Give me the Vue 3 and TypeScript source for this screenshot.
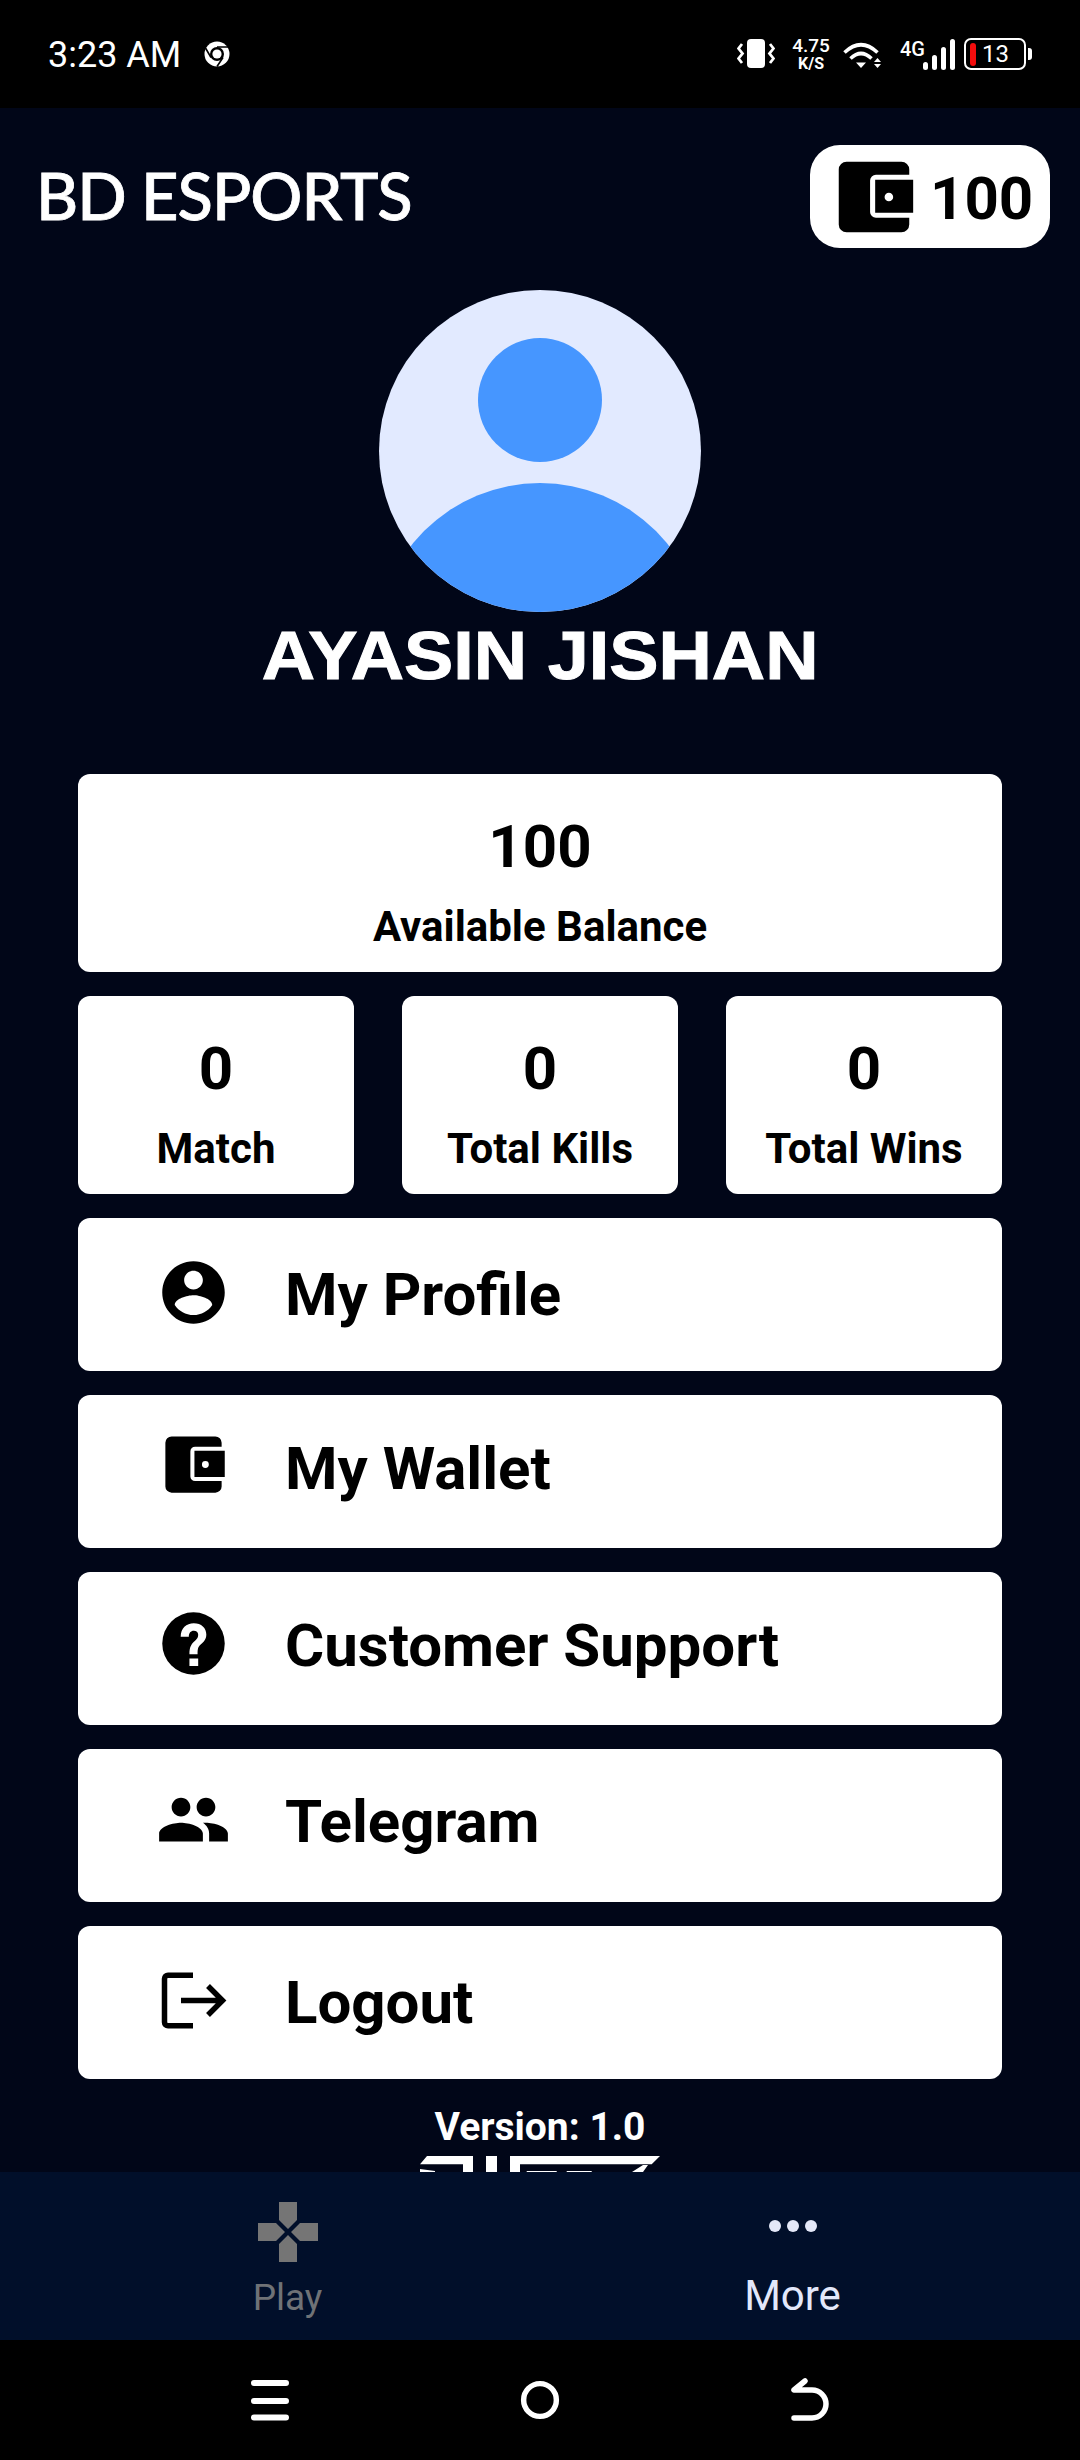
<template>
  <div class="phone">
    <!-- Android status bar -->
    <header class="status-bar">
      <span class="clock">3:23 AM</span>
      <svg class="chrome" viewBox="0 0 26 26">
        <circle cx="13" cy="13" r="12.5" fill="#fff" />
        <circle cx="13" cy="13" r="7" fill="#000" />
        <circle cx="13" cy="13" r="4.6" fill="#fff" />
        <path d="M13 6H24M7 16.5L1.5 7M19 16.5L13 25.5" stroke="#000" stroke-width="1.6" fill="none" />
      </svg>
      <div class="status-icons">
        <svg class="vibrate" viewBox="0 0 38 30">
          <rect x="10" y="0" width="18" height="29" rx="4" fill="#fff" />
          <path d="M5 5L1.5 9.500L5.500 14.500L1.500 19.500L5 24M33 5L36.500 9.500L32.500 14.500L36.500 19.500L33 24" fill="none" stroke="#fff" stroke-width="2.800" />
        </svg>
        <div class="speed">
          <span class="speed-num">4.75</span>
          <span class="speed-unit">K/S</span>
        </div>
        <svg class="wifi" viewBox="0 0 38 27">
          <path d="M1.500 11.500Q18 -4 34.500 11.500M7.500 17.500Q18 7.500 28.500 17.500" fill="none" stroke="#fff" stroke-width="3.600" />
          <path d="M13 21.500H23L18 27ZM34.500 17L38 21H31ZM31 23H38L34.500 27Z" fill="#fff" />
        </svg>
        <div class="network">
          <span class="net-label">4G</span>
          <svg class="signal" viewBox="0 0 32 31">
            <rect x="0" y="23" width="5" height="8" rx="2.500" fill="#fff" />
            <rect x="9" y="16" width="5" height="15" rx="2.500" fill="#fff" />
            <rect x="18" y="8" width="5" height="23" rx="2.500" fill="#fff" />
            <rect x="27" y="0" width="5" height="31" rx="2.500" fill="#fff" />
          </svg>
        </div>
        <div class="battery">
          <div class="battery-body">
            <span class="battery-level"></span>
            <span class="battery-num">13</span>
          </div>
          <span class="battery-nub"></span>
        </div>
      </div>
    </header>

    <main class="content">
      <div class="top-row">
        <h1 class="brand">BD ESPORTS</h1>
        <div class="wallet-pill">
          <svg class="pill-icon" viewBox="0 0 24 24"><path :d="walletPath" fill-rule="evenodd" /></svg>
          <span class="pill-amount">100</span>
        </div>
      </div>

      <svg class="avatar" viewBox="0 0 322 322">
        <defs>
          <clipPath id="avatar-clip"><circle cx="161" cy="161" r="161" /></clipPath>
        </defs>
        <circle cx="161" cy="161" r="161" fill="#e2eaff" />
        <circle cx="161" cy="110" r="62" fill="#4696ff" />
        <circle cx="161" cy="357" r="164" fill="#4696ff" clip-path="url(#avatar-clip)" />
      </svg>
      <h2 class="player-name">AYASIN JISHAN</h2>

      <section class="cards">
        <div class="card stat-card">
          <p class="stat-value">100</p>
          <p class="stat-label">Available Balance</p>
        </div>

        <div class="stat-row">
          <div v-for="stat in stats" :key="stat.label" class="card stat-card">
            <p class="stat-value">{{ stat.value }}</p>
            <p class="stat-label">{{ stat.label }}</p>
          </div>
        </div>

        <div v-for="row in menu" :key="row.label" class="card menu-row" :class="row.cls">
          <svg class="menu-icon" :class="{ outline: row.outline }" :viewBox="row.box">
            <path :d="row.d" fill-rule="evenodd" />
          </svg>
          <span class="menu-label">{{ row.label }}</span>
        </div>
      </section>

      <p class="version">Version: 1.0</p>
      <!-- Logo is cut off by the tab bar, only its top shows -->
      <svg class="logo" viewBox="0 0 260 40">
        <path d="M17 0H63V30H53V8.300H10ZM10 13L25 15V30H10ZM76 0H87V30H76ZM100 0H250L241.700 8.300H110V30H100ZM116.700 15H146.700V30H116.700ZM156.700 15H181.700V30H156.700ZM222 16L233 9H238L233 16V30H222Z" fill="#fff" />
      </svg>
    </main>

    <nav class="tab-bar">
      <div class="tab">
        <svg class="tab-icon" viewBox="0 0 60 60">
          <path d="M21 0H39V18L30 27L21 18ZM21 60H39V42L30 33L21 42ZM0 21V39H18L27 30L18 21ZM60 21V39H42L33 30L42 21Z" fill="#757575" />
        </svg>
        <span class="tab-label">Play</span>
      </div>
      <div class="tab active">
        <svg class="tab-icon" viewBox="0 0 60 60">
          <circle cx="12" cy="24" r="6" fill="#e4e8f8" />
          <circle cx="30" cy="24" r="6" fill="#e4e8f8" />
          <circle cx="48" cy="24" r="6" fill="#e4e8f8" />
        </svg>
        <span class="tab-label">More</span>
      </div>
    </nav>

    <footer class="system-nav">
      <svg class="sys-icon" viewBox="0 0 40 44">
        <path d="M5 5H37M5 23H37M5 39.500H37" stroke="#fff" stroke-width="6" stroke-linecap="round" fill="none" />
      </svg>
      <svg class="sys-icon" viewBox="0 0 44 44">
        <circle cx="22" cy="22" r="18" stroke="#fff" stroke-width="6" fill="none" />
      </svg>
      <svg class="sys-icon" viewBox="0 0 40 44">
        <path d="M14 3L3 12H21A14 14 0 0 1 21 40H3" stroke="#fff" stroke-width="5.500" stroke-linecap="round" stroke-linejoin="round" fill="none" />
      </svg>
    </footer>
  </div>
</template>

<script setup lang="ts">
type MenuRow = {
  label: string;
  cls: string;
  box: string;
  d: string;
  outline?: boolean;
};

// body with the notch, inner pocket, dot as a hole (evenodd)
const walletPath =
  "M21 17.300V19a2 2 0 0 1-2 2H5a2 2 0 0 1-2-2V5a2 2 0 0 1 2-2h14a2 2 0 0 1 2 2v1.300H12.500a1.500 1.500 0 0 0-1.500 1.500v8a1.500 1.500 0 0 0 1.500 1.500zM12.300 7.600H22V16H12.300zM15.800 10.900a1.100 1.100 0 1 0 0 2.200a1.100 1.100 0 0 0 0-2.200z";

const stats = [
  { label: "Match", value: 0 },
  { label: "Total Kills", value: 0 },
  { label: "Total Wins", value: 0 },
];

const menu: MenuRow[] = [
  {
    label: "My Profile",
    cls: "row-profile",
    box: "0 0 24 24",
    d: "M12 2C6.480 2 2 6.480 2 12s4.480 10 10 10 10-4.480 10-10S17.520 2 12 2zm0 3c1.660 0 3 1.340 3 3s-1.340 3-3 3-3-1.340-3-3 1.340-3 3-3zm0 14.200c-2.500 0-4.710-1.280-6-3.220.03-1.990 4-3.080 6-3.080 1.990 0 5.970 1.090 6 3.080-1.290 1.940-3.500 3.220-6 3.220z",
  },
  { label: "My Wallet", cls: "row-wallet", box: "0 0 24 24", d: walletPath },
  {
    label: "Customer Support",
    cls: "row-support",
    box: "0 0 24 24",
    d: "M12 2a10 10 0 1 0 0 20a10 10 0 0 0 0-20zM10.700 16.800h2.800v2.400h-2.800zM7.900 9.800C7.900 7.100 9.700 5.500 12.100 5.500C14.500 5.500 16.100 7 16.100 9.100C16.100 10.600 15.300 11.500 14.300 12.300C13.500 13 13.300 13.600 13.300 15.400H10.700C10.700 13.200 11.200 12.200 12.500 11.100C13.200 10.500 13.500 10 13.500 9.200C13.500 8.400 12.900 7.900 12.100 7.900C11.100 7.900 10.500 8.600 10.500 9.800Z",
  },
  {
    label: "Telegram",
    cls: "row-telegram",
    box: "0 0 24 24",
    d: "M16 11c1.660 0 2.990-1.340 2.990-3S17.660 5 16 5c-1.660 0-3 1.340-3 3s1.340 3 3 3zm-8 0c1.660 0 2.990-1.340 2.990-3S9.660 5 8 5C6.340 5 5 6.340 5 8s1.340 3 3 3zm0 2c-2.330 0-7 1.170-7 3.500V19h14v-2.500c0-2.330-4.670-3.500-7-3.500zm8 0c-.29 0-.62.02-.97.05 1.160.84 1.970 1.970 1.970 3.450V19h6v-2.500c0-2.330-4.670-3.500-7-3.500z",
  },
  {
    label: "Logout",
    cls: "row-logout",
    box: "0 0 75 75",
    outline: true,
    d: "M37 12.200H12a3.500 3.500 0 0 0-3.500 3.500V59.300a3.500 3.500 0 0 0 3.500 3.500H37M25 37.500H66M52 23L66.500 37.500L52 52",
  },
];
</script>

<style>
html,
body {
  margin: 0;
  background: #000;
}
</style>

<style scoped>
.phone {
  width: 1080px;
  height: 2460px;
  display: flex;
  flex-direction: column;
  overflow: hidden;
  background: #000;
  font-family: Roboto, "Liberation Sans", sans-serif;
  color: #000;
}

/* status bar */
.status-bar {
  height: 108px;
  flex: none;
  display: flex;
  align-items: center;
  padding: 0 48px 0 48px;
  box-sizing: border-box;
  color: #fff;
}

.clock {
  font-size: 36px;
  line-height: 40px;
  margin-top: 2px;
}

.chrome {
  width: 26px;
  height: 26px;
  margin-left: 23px;
}

.status-icons {
  margin-left: auto;
  display: flex;
  align-items: center;
}

.vibrate {
  width: 38px;
  height: 30px;
}

.speed {
  width: 38px;
  margin-left: 17px;
  display: flex;
  flex-direction: column;
  align-items: center;
  font-weight: 700;
}

.speed-num {
  font-size: 19px;
  line-height: 20px;
  font-weight: 500;
}

.speed-unit {
  font-size: 16px;
  line-height: 16px;
}

.wifi {
  width: 38px;
  height: 27px;
  margin-left: 13px;
}

.network {
  display: flex;
  align-items: flex-end;
  margin-left: 19px;
  height: 31px;
}

.net-label {
  font-size: 20px;
  font-weight: 500;
  line-height: 20px;
  align-self: flex-start;
  width: 23px;
}

.signal {
  width: 32px;
  height: 31px;
}

.battery {
  display: flex;
  align-items: center;
  margin-left: 9px;
}

.battery-body {
  width: 62px;
  height: 32px;
  box-sizing: border-box;
  border: 2px solid #fff;
  border-radius: 7px;
  display: flex;
  align-items: center;
  padding-left: 4px;
}

.battery-level {
  width: 6px;
  height: 23px;
  border-radius: 3px;
  background: #f40d0d;
}

.battery-num {
  font-size: 24px;
  line-height: 28px;
  margin-left: 6px;
}

.battery-nub {
  width: 4px;
  height: 12px;
  margin-left: 2px;
  background: #fff;
  border-radius: 0 3px 3px 0;
}

/* scroll area, cut off by the tab bar */
.content {
  flex: 1;
  min-height: 0;
  overflow: hidden;
  background: #010618;
  display: flex;
  flex-direction: column;
  align-items: center;
}

.top-row {
  width: 100%;
  box-sizing: border-box;
  flex: none;
  display: flex;
  justify-content: space-between;
  align-items: center;
  padding: 37px 30px 0 36px;
}

.brand {
  margin: 0 0 4px;
  font-family: Lato, "Liberation Sans", sans-serif;
  font-size: 65px;
  font-weight: 500;
  line-height: 80px;
  color: #fff;
  letter-spacing: -1px;
  -webkit-text-stroke: 0.8px #fff;
}

.wallet-pill {
  width: 240px;
  height: 103px;
  box-sizing: border-box;
  background: #fff;
  border-radius: 30px;
  display: flex;
  align-items: center;
  padding-left: 17px;
}

.pill-icon {
  width: 94px;
  height: 94px;
  flex: none;
}

.pill-amount {
  font-size: 60px;
  font-weight: 700;
  line-height: 70px;
  margin: 4px 0 0 9px;
}

.avatar {
  width: 322px;
  height: 322px;
  flex: none;
  margin-top: 42px;
}

.player-name {
  margin: 4px 0 0;
  flex: none;
  font-family: "Liberation Sans", Arial, sans-serif;
  font-size: 69px;
  font-weight: 700;
  line-height: 80px;
  color: #fff;
  transform: scaleX(1.07);
  -webkit-text-stroke: 1px #fff;
}

.cards {
  width: 100%;
  box-sizing: border-box;
  flex: none;
  margin-top: 78px;
  padding: 0 78px;
  display: flex;
  flex-direction: column;
  gap: 24px;
}

.card {
  background: #fff;
  border-radius: 12px;
}

.stat-card {
  height: 198px;
  box-sizing: border-box;
  padding-top: 38px;
  text-align: center;
}

.stat-row {
  display: grid;
  grid-template-columns: repeat(3, 276px);
  justify-content: space-between;
}

.stat-value {
  margin: 0;
  font-size: 60px;
  font-weight: 700;
  line-height: 70px;
}

.stat-label {
  margin: 20px 0 0;
  font-size: 42px;
  font-weight: 700;
  line-height: 50px;
}

.menu-row {
  height: 153px;
  box-sizing: border-box;
  display: flex;
  align-items: center;
  padding-left: 78px;
}

.menu-icon {
  width: 75px;
  height: 75px;
  flex: none;
  margin-bottom: 5px;
}

.menu-icon.outline path {
  fill: none;
  stroke: #000;
  stroke-width: 5.500;
}

.menu-label {
  margin-left: 54px;
  font-size: 60px;
  font-weight: 700;
  line-height: 70px;
}

.row-wallet {
  padding-bottom: 6px;
}

.row-wallet .menu-icon {
  margin-bottom: 8px;
}

.row-support {
  padding-bottom: 6px;
}

.row-telegram {
  padding-bottom: 8px;
}

.version {
  margin: 26px 0 0;
  flex: none;
  font-size: 39px;
  font-weight: 700;
  line-height: 44px;
  color: #fff;
}

.logo {
  width: 260px;
  height: 40px;
  flex: none;
  margin-top: 7px;
}

/* bottom tabs */
.tab-bar {
  height: 168px;
  flex: none;
  box-sizing: border-box;
  padding: 0 35px;
  display: grid;
  grid-template-columns: 1fr 1fr;
  background: #010f2a;
}

.tab {
  display: flex;
  flex-direction: column;
  align-items: center;
  padding-top: 30px;
  color: #6f7276;
}

.tab.active {
  color: #e3e8fb;
}

.tab-icon {
  width: 60px;
  height: 60px;
}

.tab-label {
  font-size: 37px;
  line-height: 44px;
  margin-top: 14px;
}

.tab.active .tab-label {
  font-size: 42px;
  margin-top: 12px;
}

/* android nav buttons */
.system-nav {
  height: 120px;
  flex: none;
  box-sizing: border-box;
  padding: 0 249px;
  display: flex;
  justify-content: space-between;
  align-items: center;
  background: #000;
}

.sys-icon {
  width: 40px;
  height: 44px;
}
</style>
